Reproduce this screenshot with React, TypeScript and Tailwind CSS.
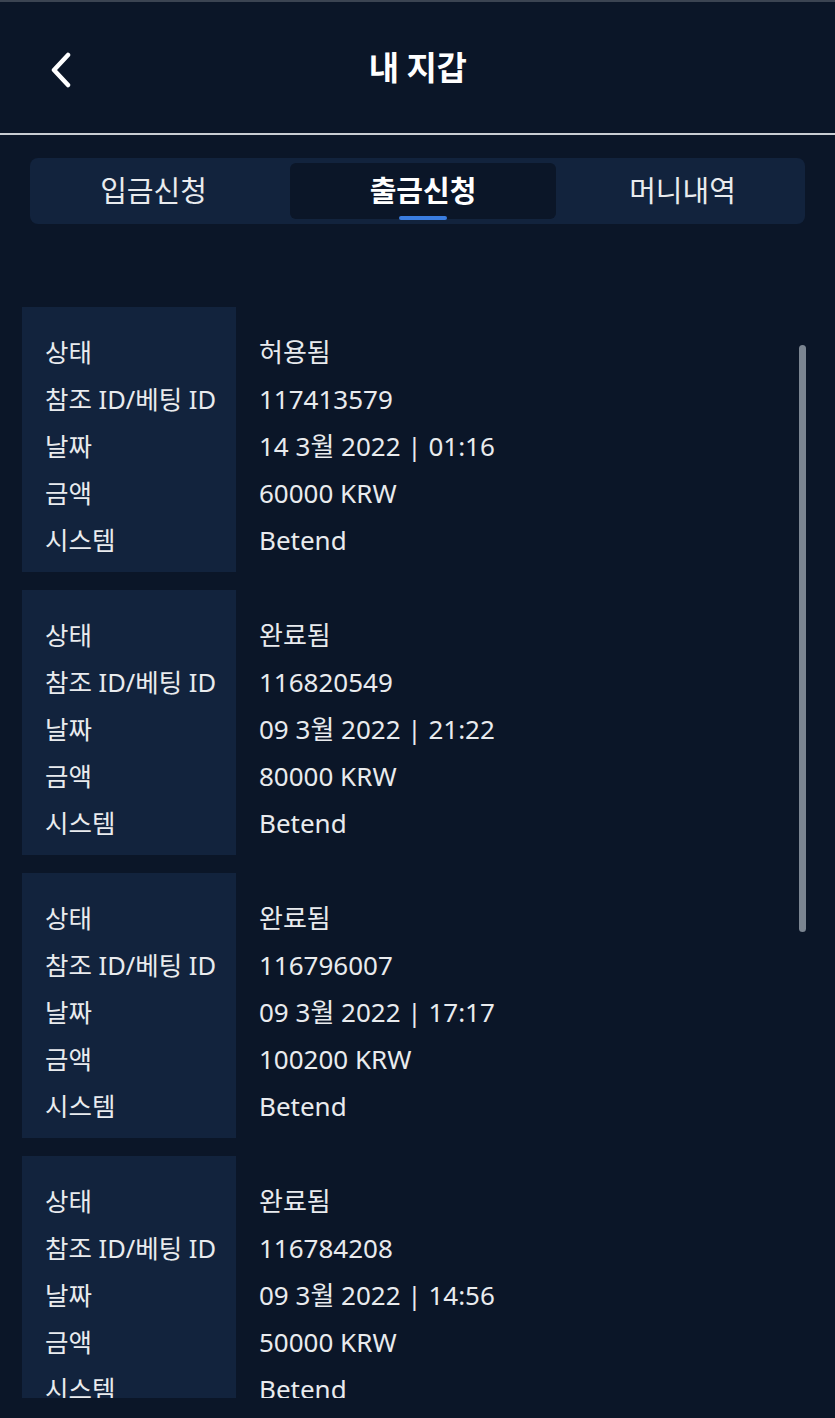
import React from 'react';

interface Withdrawal {
  status: string;
  refId: string;
  date: string;
  amount: string;
  system: string;
}

const rows: Withdrawal[] = [
  { status: '허용됨', refId: '117413579', date: '14 3월 2022 | 01:16', amount: '60000 KRW', system: 'Betend' },
  { status: '완료됨', refId: '116820549', date: '09 3월 2022 | 21:22', amount: '80000 KRW', system: 'Betend' },
  { status: '완료됨', refId: '116796007', date: '09 3월 2022 | 17:17', amount: '100200 KRW', system: 'Betend' },
  { status: '완료됨', refId: '116784208', date: '09 3월 2022 | 14:56', amount: '50000 KRW', system: 'Betend' },
];

const labels = ['상태', '참조 ID/베팅 ID', '날짜', '금액', '시스템'];

const font = { fontFamily: '"Noto Sans", "Noto Sans CJK KR", sans-serif' };

const WithdrawalCard: React.FC<{ item: Withdrawal }> = ({ item }) => {
  const values = [item.status, item.refId, item.date, item.amount, item.system];
  return (
    <div className="flex h-[265px] shrink-0">
      <div className="w-[214px] bg-[#12233d] pl-[23px] pt-[22px]">
        {labels.map((l) => (
          <div key={l} className="h-[47px] leading-[47px] text-[25.5px] text-[#e9ebee] whitespace-nowrap">{l}</div>
        ))}
      </div>
      <div className="pl-[23px] pt-[22px]">
        {values.map((v, i) => (
          <div key={i} className="h-[47px] leading-[47px] text-[26px] text-[#e9ebee] whitespace-nowrap">{v}</div>
        ))}
      </div>
    </div>
  );
};

export default function App() {
  return (
    <div className="w-[835px] h-[1418px] bg-[#0b1628] border-t-2 border-[#3b4452] flex flex-col overflow-hidden" style={font}>
      <div className="relative h-[133px] shrink-0 flex items-center justify-center border-b-2 border-[#c9cdd2]">
        <svg className="absolute left-[46px] top-[50px]" width="30" height="36" viewBox="0 0 30 36" fill="none">
          <path d="M22 3 L8 18 L22 33" stroke="#ffffff" strokeWidth="4.5" strokeLinecap="round" strokeLinejoin="round" />
        </svg>
        <h1 className="text-[33px] font-bold text-white tracking-[-0.5px]">내 지갑</h1>
      </div>

      <div className="px-[30px] pt-[23px] shrink-0">
        <div className="h-[66px] bg-[#12233d] rounded-[8px] flex items-center px-[5px]">
          <button className="w-[255px] h-[56px] pr-[18px] text-[29px] text-[#e9ebee]">입금신청</button>
          <button className="relative w-[266px] h-[56px] bg-[#0b1628] rounded-[6px] text-[29px] font-bold text-white">
            출금신청
            <span className="absolute left-1/2 -translate-x-1/2 bottom-[-1px] w-[48px] h-[4px] rounded-full bg-[#3a7de0]" />
          </button>
          <button className="flex-1 h-[56px] pl-[9px] text-[29px] text-[#e9ebee]">머니내역</button>
        </div>
      </div>

      <div className="relative flex-1 pt-[83px] pb-[20px] overflow-hidden">
        <div className="h-full overflow-hidden px-[22px] flex flex-col gap-[18px]">
          {rows.map((r) => (
            <WithdrawalCard key={r.refId} item={r} />
          ))}
        </div>
        <div className="absolute right-[29px] top-[121px] w-[7px] h-[587px] rounded-full bg-[#7b8591]" />
      </div>
    </div>
  );
}
